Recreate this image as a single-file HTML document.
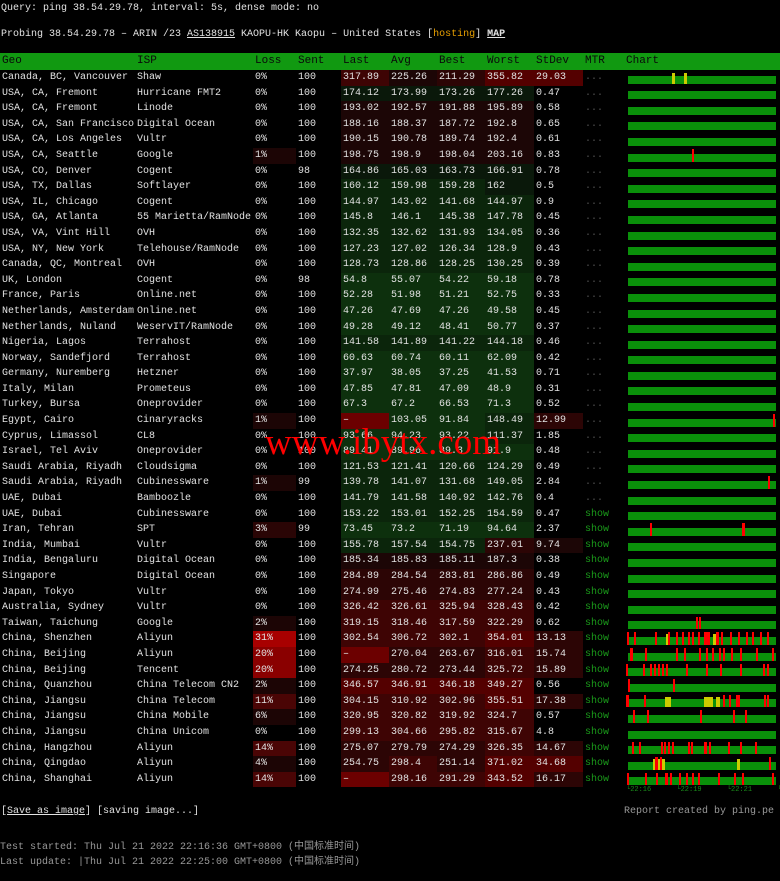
<!DOCTYPE html>
<html><head><meta charset="utf-8"><style>
body{margin:0;background:#000;width:780px;height:881px;overflow:hidden;font-family:"Liberation Mono","Noto Sans CJK SC",monospace;font-size:10px;color:#e2e2e2;position:relative}
.t{position:absolute;left:1px;white-space:pre}
table{position:absolute;left:0;top:53px;border-collapse:collapse;table-layout:fixed;width:780px}
td{padding:0 0 0 2px;height:15.6px;line-height:15.6px;white-space:nowrap;overflow:hidden}
tr.hd td{background:#119911;color:#0a0a0a;font-size:11px;height:17px;line-height:17px}
.h{background:#0d300d}.g{background:#0b250b}.f{background:#0a180a}.a{background:#1c0606}.b{background:#2c0505}.c{background:#3e0404}.d{background:#540000}.e{background:#6c0000}
.l1{background:#1c0505}.l2{background:#2a0505}.l3{background:#4a0505}.l4{background:#8a0000}.l5{background:#a80000}
.m{color:#555}.sh{color:#1a9a1a}
.ch{position:relative;height:15.6px}
.bar{position:absolute;left:2px;right:4px;bottom:2px;height:8px;background:#0a900a}
.s{position:absolute;top:1px;bottom:2px;width:2px;background:#f00}
.y{position:absolute;top:3px;bottom:2px;width:3px;background:#cc0}
</style></head><body>
<div class="t" style="top:3px">Query: ping 38.54.29.78, interval: 5s, dense mode: no</div>
<div class="t" style="top:29px">Probing 38.54.29.78 – ARIN /23 <u>AS138915</u> KAOPU-HK Kaopu – United States [<span style="color:#e8a000">hosting</span>] <b><u>MAP</u></b></div>
<table>
<colgroup><col style="width:135px"><col style="width:118px"><col style="width:43px"><col style="width:45px"><col style="width:48px"><col style="width:48px"><col style="width:48px"><col style="width:49px"><col style="width:49px"><col style="width:41px"><col style="width:156px"></colgroup>
<tr class="hd"><td>Geo</td><td>ISP</td><td>Loss</td><td>Sent</td><td>Last</td><td>Avg</td><td>Best</td><td>Worst</td><td>StDev</td><td>MTR</td><td>Chart</td></tr>
<tr><td>Canada, BC, Vancouver</td><td>Shaw</td><td>0%</td><td>100</td><td class="c">317.89</td><td class="a">225.26</td><td class="b">211.29</td><td class="d">355.82</td><td class="d">29.03</td><td class="m">...</td><td><div class="ch"><div class="bar"></div><i class="y" style="left:46px"></i><i class="y" style="left:58px"></i></div></td></tr>
<tr><td>USA, CA, Fremont</td><td>Hurricane FMT2</td><td>0%</td><td>100</td><td class="f">174.12</td><td class="f">173.99</td><td class="f">173.26</td><td class="f">177.26</td><td>0.47</td><td class="m">...</td><td><div class="ch"><div class="bar"></div></div></td></tr>
<tr><td>USA, CA, Fremont</td><td>Linode</td><td>0%</td><td>100</td><td class="a">193.02</td><td class="a">192.57</td><td class="a">191.88</td><td class="a">195.89</td><td>0.58</td><td class="m">...</td><td><div class="ch"><div class="bar"></div></div></td></tr>
<tr><td>USA, CA, San Francisco</td><td>Digital Ocean</td><td>0%</td><td>100</td><td class="a">188.16</td><td class="a">188.37</td><td class="a">187.72</td><td class="a">192.8</td><td>0.65</td><td class="m">...</td><td><div class="ch"><div class="bar"></div></div></td></tr>
<tr><td>USA, CA, Los Angeles</td><td>Vultr</td><td>0%</td><td>100</td><td class="a">190.15</td><td class="a">190.78</td><td class="a">189.74</td><td class="a">192.4</td><td>0.61</td><td class="m">...</td><td><div class="ch"><div class="bar"></div></div></td></tr>
<tr><td>USA, CA, Seattle</td><td>Google</td><td class="l1">1%</td><td>100</td><td class="a">198.75</td><td class="a">198.9</td><td class="a">198.04</td><td class="a">203.16</td><td>0.83</td><td class="m">...</td><td><div class="ch"><div class="bar"></div><i class="s" style="left:66px"></i></div></td></tr>
<tr><td>USA, CO, Denver</td><td>Cogent</td><td>0%</td><td>98</td><td class="f">164.86</td><td class="f">165.03</td><td class="f">163.73</td><td class="f">166.91</td><td>0.78</td><td class="m">...</td><td><div class="ch"><div class="bar"></div></div></td></tr>
<tr><td>USA, TX, Dallas</td><td>Softlayer</td><td>0%</td><td>100</td><td class="g">160.12</td><td class="g">159.98</td><td class="g">159.28</td><td class="f">162</td><td>0.5</td><td class="m">...</td><td><div class="ch"><div class="bar"></div></div></td></tr>
<tr><td>USA, IL, Chicago</td><td>Cogent</td><td>0%</td><td>100</td><td class="g">144.97</td><td class="g">143.02</td><td class="g">141.68</td><td class="g">144.97</td><td>0.9</td><td class="m">...</td><td><div class="ch"><div class="bar"></div></div></td></tr>
<tr><td>USA, GA, Atlanta</td><td>55 Marietta/RamNode</td><td>0%</td><td>100</td><td class="g">145.8</td><td class="g">146.1</td><td class="g">145.38</td><td class="g">147.78</td><td>0.45</td><td class="m">...</td><td><div class="ch"><div class="bar"></div></div></td></tr>
<tr><td>USA, VA, Vint Hill</td><td>OVH</td><td>0%</td><td>100</td><td class="g">132.35</td><td class="g">132.62</td><td class="g">131.93</td><td class="g">134.05</td><td>0.36</td><td class="m">...</td><td><div class="ch"><div class="bar"></div></div></td></tr>
<tr><td>USA, NY, New York</td><td>Telehouse/RamNode</td><td>0%</td><td>100</td><td class="g">127.23</td><td class="g">127.02</td><td class="g">126.34</td><td class="g">128.9</td><td>0.43</td><td class="m">...</td><td><div class="ch"><div class="bar"></div></div></td></tr>
<tr><td>Canada, QC, Montreal</td><td>OVH</td><td>0%</td><td>100</td><td class="g">128.73</td><td class="g">128.86</td><td class="g">128.25</td><td class="g">130.25</td><td>0.39</td><td class="m">...</td><td><div class="ch"><div class="bar"></div></div></td></tr>
<tr><td>UK, London</td><td>Cogent</td><td>0%</td><td>98</td><td class="h">54.8</td><td class="h">55.07</td><td class="h">54.22</td><td class="h">59.18</td><td>0.78</td><td class="m">...</td><td><div class="ch"><div class="bar"></div></div></td></tr>
<tr><td>France, Paris</td><td>Online.net</td><td>0%</td><td>100</td><td class="h">52.28</td><td class="h">51.98</td><td class="h">51.21</td><td class="h">52.75</td><td>0.33</td><td class="m">...</td><td><div class="ch"><div class="bar"></div></div></td></tr>
<tr><td>Netherlands, Amsterdam</td><td>Online.net</td><td>0%</td><td>100</td><td class="h">47.26</td><td class="h">47.69</td><td class="h">47.26</td><td class="h">49.58</td><td>0.45</td><td class="m">...</td><td><div class="ch"><div class="bar"></div></div></td></tr>
<tr><td>Netherlands, Nuland</td><td>WeservIT/RamNode</td><td>0%</td><td>100</td><td class="h">49.28</td><td class="h">49.12</td><td class="h">48.41</td><td class="h">50.77</td><td>0.37</td><td class="m">...</td><td><div class="ch"><div class="bar"></div></div></td></tr>
<tr><td>Nigeria, Lagos</td><td>Terrahost</td><td>0%</td><td>100</td><td class="g">141.58</td><td class="g">141.89</td><td class="g">141.22</td><td class="g">144.18</td><td>0.46</td><td class="m">...</td><td><div class="ch"><div class="bar"></div></div></td></tr>
<tr><td>Norway, Sandefjord</td><td>Terrahost</td><td>0%</td><td>100</td><td class="h">60.63</td><td class="h">60.74</td><td class="h">60.11</td><td class="h">62.09</td><td>0.42</td><td class="m">...</td><td><div class="ch"><div class="bar"></div></div></td></tr>
<tr><td>Germany, Nuremberg</td><td>Hetzner</td><td>0%</td><td>100</td><td class="h">37.97</td><td class="h">38.05</td><td class="h">37.25</td><td class="h">41.53</td><td>0.71</td><td class="m">...</td><td><div class="ch"><div class="bar"></div></div></td></tr>
<tr><td>Italy, Milan</td><td>Prometeus</td><td>0%</td><td>100</td><td class="h">47.85</td><td class="h">47.81</td><td class="h">47.09</td><td class="h">48.9</td><td>0.31</td><td class="m">...</td><td><div class="ch"><div class="bar"></div></div></td></tr>
<tr><td>Turkey, Bursa</td><td>Oneprovider</td><td>0%</td><td>100</td><td class="h">67.3</td><td class="h">67.2</td><td class="h">66.53</td><td class="h">71.3</td><td>0.52</td><td class="m">...</td><td><div class="ch"><div class="bar"></div></div></td></tr>
<tr><td>Egypt, Cairo</td><td>Cinaryracks</td><td class="l1">1%</td><td>100</td><td class="e">–</td><td class="h">103.05</td><td class="h">91.84</td><td class="g">148.49</td><td class="b">12.99</td><td class="m">...</td><td><div class="ch"><div class="bar"></div><i class="s" style="left:147px"></i></div></td></tr>
<tr><td>Cyprus, Limassol</td><td>CL8</td><td>0%</td><td>100</td><td class="h">93.66</td><td class="h">94.23</td><td class="h">93.22</td><td class="g">111.37</td><td>1.85</td><td class="m">...</td><td><div class="ch"><div class="bar"></div></div></td></tr>
<tr><td>Israel, Tel Aviv</td><td>Oneprovider</td><td>0%</td><td>100</td><td class="h">89.41</td><td class="h">89.96</td><td class="h">89.3</td><td class="h">91.9</td><td>0.48</td><td class="m">...</td><td><div class="ch"><div class="bar"></div></div></td></tr>
<tr><td>Saudi Arabia, Riyadh</td><td>Cloudsigma</td><td>0%</td><td>100</td><td class="g">121.53</td><td class="g">121.41</td><td class="g">120.66</td><td class="g">124.29</td><td>0.49</td><td class="m">...</td><td><div class="ch"><div class="bar"></div></div></td></tr>
<tr><td>Saudi Arabia, Riyadh</td><td>Cubinessware</td><td class="l1">1%</td><td>99</td><td class="g">139.78</td><td class="g">141.07</td><td class="g">131.68</td><td class="g">149.05</td><td>2.84</td><td class="m">...</td><td><div class="ch"><div class="bar"></div><i class="s" style="left:142px"></i></div></td></tr>
<tr><td>UAE, Dubai</td><td>Bamboozle</td><td>0%</td><td>100</td><td class="g">141.79</td><td class="g">141.58</td><td class="g">140.92</td><td class="g">142.76</td><td>0.4</td><td class="m">...</td><td><div class="ch"><div class="bar"></div></div></td></tr>
<tr><td>UAE, Dubai</td><td>Cubinessware</td><td>0%</td><td>100</td><td class="g">153.22</td><td class="g">153.01</td><td class="g">152.25</td><td class="g">154.59</td><td>0.47</td><td class="sh">show</td><td><div class="ch"><div class="bar"></div></div></td></tr>
<tr><td>Iran, Tehran</td><td>SPT</td><td class="l2">3%</td><td>99</td><td class="h">73.45</td><td class="h">73.2</td><td class="h">71.19</td><td class="h">94.64</td><td>2.37</td><td class="sh">show</td><td><div class="ch"><div class="bar"></div><i class="s" style="left:24px"></i><i class="s" style="left:116px;width:3px"></i></div></td></tr>
<tr><td>India, Mumbai</td><td>Vultr</td><td>0%</td><td>100</td><td class="g">155.78</td><td class="g">157.54</td><td class="g">154.75</td><td class="b">237.01</td><td class="a">9.74</td><td class="sh">show</td><td><div class="ch"><div class="bar"></div></div></td></tr>
<tr><td>India, Bengaluru</td><td>Digital Ocean</td><td>0%</td><td>100</td><td class="a">185.34</td><td class="a">185.83</td><td class="a">185.11</td><td class="a">187.3</td><td>0.38</td><td class="sh">show</td><td><div class="ch"><div class="bar"></div></div></td></tr>
<tr><td>Singapore</td><td>Digital Ocean</td><td>0%</td><td>100</td><td class="b">284.89</td><td class="b">284.54</td><td class="b">283.81</td><td class="b">286.86</td><td>0.49</td><td class="sh">show</td><td><div class="ch"><div class="bar"></div></div></td></tr>
<tr><td>Japan, Tokyo</td><td>Vultr</td><td>0%</td><td>100</td><td class="b">274.99</td><td class="b">275.46</td><td class="b">274.83</td><td class="b">277.24</td><td>0.43</td><td class="sh">show</td><td><div class="ch"><div class="bar"></div></div></td></tr>
<tr><td>Australia, Sydney</td><td>Vultr</td><td>0%</td><td>100</td><td class="c">326.42</td><td class="c">326.61</td><td class="c">325.94</td><td class="c">328.43</td><td>0.42</td><td class="sh">show</td><td><div class="ch"><div class="bar"></div></div></td></tr>
<tr><td>Taiwan, Taichung</td><td>Google</td><td class="l1">2%</td><td>100</td><td class="c">319.15</td><td class="c">318.46</td><td class="c">317.59</td><td class="c">322.29</td><td>0.62</td><td class="sh">show</td><td><div class="ch"><div class="bar"></div><i class="s" style="left:70px"></i><i class="s" style="left:73px"></i></div></td></tr>
<tr><td>China, Shenzhen</td><td>Aliyun</td><td class="l5">31%</td><td>100</td><td class="c">302.54</td><td class="c">306.72</td><td class="c">302.1</td><td class="d">354.01</td><td class="b">13.13</td><td class="sh">show</td><td><div class="ch"><div class="bar"></div><i class="s" style="left:1px"></i><i class="s" style="left:8px"></i><i class="s" style="left:29px"></i><i class="y" style="left:40px"></i><i class="s" style="left:42px"></i><i class="s" style="left:50px"></i><i class="s" style="left:56px"></i><i class="s" style="left:62px"></i><i class="s" style="left:66px"></i><i class="s" style="left:72px"></i><i class="s" style="left:78px"></i><i class="s" style="left:80px;width:4px"></i><i class="y" style="left:87px"></i><i class="s" style="left:90px;width:3px"></i><i class="s" style="left:95px"></i><i class="s" style="left:104px"></i><i class="s" style="left:112px"></i><i class="s" style="left:120px"></i><i class="s" style="left:126px"></i><i class="s" style="left:134px"></i><i class="s" style="left:141px"></i></div></td></tr>
<tr><td>China, Beijing</td><td>Aliyun</td><td class="l4">20%</td><td>100</td><td class="e">–</td><td class="b">270.04</td><td class="b">263.67</td><td class="c">316.01</td><td class="b">15.74</td><td class="sh">show</td><td><div class="ch"><div class="bar"></div><i class="s" style="left:4px;width:3px"></i><i class="s" style="left:19px"></i><i class="s" style="left:50px"></i><i class="s" style="left:58px"></i><i class="s" style="left:73px"></i><i class="s" style="left:80px"></i><i class="s" style="left:86px"></i><i class="s" style="left:93px"></i><i class="s" style="left:97px"></i><i class="s" style="left:105px"></i><i class="s" style="left:114px"></i><i class="s" style="left:130px"></i><i class="s" style="left:146px"></i></div></td></tr>
<tr><td>China, Beijing</td><td>Tencent</td><td class="l4">20%</td><td>100</td><td class="b">274.25</td><td class="b">280.72</td><td class="b">273.44</td><td class="c">325.72</td><td class="b">15.89</td><td class="sh">show</td><td><div class="ch"><div class="bar"></div><i class="s" style="left:0px"></i><i class="s" style="left:17px"></i><i class="s" style="left:24px"></i><i class="s" style="left:28px"></i><i class="s" style="left:32px"></i><i class="s" style="left:36px"></i><i class="s" style="left:40px"></i><i class="s" style="left:60px"></i><i class="s" style="left:80px"></i><i class="s" style="left:94px"></i><i class="s" style="left:114px"></i><i class="s" style="left:137px"></i><i class="s" style="left:141px"></i></div></td></tr>
<tr><td>China, Quanzhou</td><td>China Telecom CN2</td><td class="l1">2%</td><td>100</td><td class="d">346.57</td><td class="d">346.91</td><td class="d">346.18</td><td class="d">349.27</td><td>0.56</td><td class="sh">show</td><td><div class="ch"><div class="bar"></div><i class="s" style="left:2px"></i><i class="s" style="left:47px"></i></div></td></tr>
<tr><td>China, Jiangsu</td><td>China Telecom</td><td class="l3">11%</td><td>100</td><td class="c">304.15</td><td class="c">310.92</td><td class="c">302.96</td><td class="d">355.51</td><td class="b">17.38</td><td class="sh">show</td><td><div class="ch"><div class="bar"></div><i class="s" style="left:0px;width:3px"></i><i class="s" style="left:18px"></i><i class="y" style="left:39px;width:6px"></i><i class="y" style="left:78px;width:9px"></i><i class="y" style="left:90px;width:4px"></i><i class="s" style="left:97px"></i><i class="s" style="left:103px"></i><i class="s" style="left:110px;width:4px"></i><i class="s" style="left:138px"></i><i class="s" style="left:141px"></i></div></td></tr>
<tr><td>China, Jiangsu</td><td>China Mobile</td><td class="l1">6%</td><td>100</td><td class="c">320.95</td><td class="c">320.82</td><td class="c">319.92</td><td class="c">324.7</td><td>0.57</td><td class="sh">show</td><td><div class="ch"><div class="bar"></div><i class="s" style="left:7px"></i><i class="s" style="left:21px"></i><i class="s" style="left:74px"></i><i class="s" style="left:107px"></i><i class="s" style="left:119px"></i></div></td></tr>
<tr><td>China, Jiangsu</td><td>China Unicom</td><td>0%</td><td>100</td><td class="c">299.13</td><td class="c">304.66</td><td class="c">295.82</td><td class="c">315.67</td><td>4.8</td><td class="sh">show</td><td><div class="ch"><div class="bar"></div></div></td></tr>
<tr><td>China, Hangzhou</td><td>Aliyun</td><td class="l3">14%</td><td>100</td><td class="b">275.07</td><td class="b">279.79</td><td class="b">274.29</td><td class="c">326.35</td><td class="b">14.67</td><td class="sh">show</td><td><div class="ch"><div class="bar"></div><i class="s" style="left:6px"></i><i class="s" style="left:13px"></i><i class="s" style="left:35px"></i><i class="s" style="left:38px"></i><i class="s" style="left:42px"></i><i class="s" style="left:46px"></i><i class="s" style="left:62px"></i><i class="s" style="left:65px"></i><i class="s" style="left:78px;width:3px"></i><i class="s" style="left:83px"></i><i class="s" style="left:102px"></i><i class="s" style="left:114px"></i><i class="s" style="left:129px"></i></div></td></tr>
<tr><td>China, Qingdao</td><td>Aliyun</td><td class="l1">4%</td><td>100</td><td class="b">254.75</td><td class="c">298.4</td><td class="b">251.14</td><td class="d">371.02</td><td class="d">34.68</td><td class="sh">show</td><td><div class="ch"><div class="bar"></div><i class="y" style="left:27px;width:12px"></i><i class="s" style="left:29px;width:3px"></i><i class="s" style="left:34px"></i><i class="y" style="left:111px"></i><i class="s" style="left:143px"></i></div></td></tr>
<tr><td>China, Shanghai</td><td>Aliyun</td><td class="l3">14%</td><td>100</td><td class="e">–</td><td class="c">298.16</td><td class="c">291.29</td><td class="d">343.52</td><td class="b">16.17</td><td class="sh">show</td><td><div class="ch"><div class="bar"></div><i class="s" style="left:1px"></i><i class="s" style="left:19px"></i><i class="s" style="left:30px"></i><i class="s" style="left:39px;width:3px"></i><i class="s" style="left:44px"></i><i class="s" style="left:53px"></i><i class="s" style="left:60px"></i><i class="s" style="left:66px"></i><i class="s" style="left:72px"></i><i class="s" style="left:92px"></i><i class="s" style="left:108px"></i><i class="s" style="left:116px"></i><i class="s" style="left:146px"></i></div></td></tr>
</table>
<div style="position:absolute;top:786px;left:626px;font-size:7px;color:#1a8a1a;white-space:pre">└22:16      └22:19      └22:21      └22:23</div>
<div style="position:absolute;left:265px;top:421px;font-family:'Liberation Serif',serif;font-size:37px;color:#f00;white-space:nowrap">www.ibytx.com</div>
<div class="t" style="top:806px;left:1px">[<u>Save as image</u>] [saving image...]</div>
<div class="t" style="top:806px;left:624px;color:#999">Report created by ping.pe</div>
<div class="t" style="top:837px;left:0;color:#999">Test started: Thu Jul 21 2022 22:16:36 GMT+0800 (中国标准时间)</div>
<div class="t" style="top:852px;left:0;color:#999">Last update: |Thu Jul 21 2022 22:25:00 GMT+0800 (中国标准时间)</div>
</body></html>
